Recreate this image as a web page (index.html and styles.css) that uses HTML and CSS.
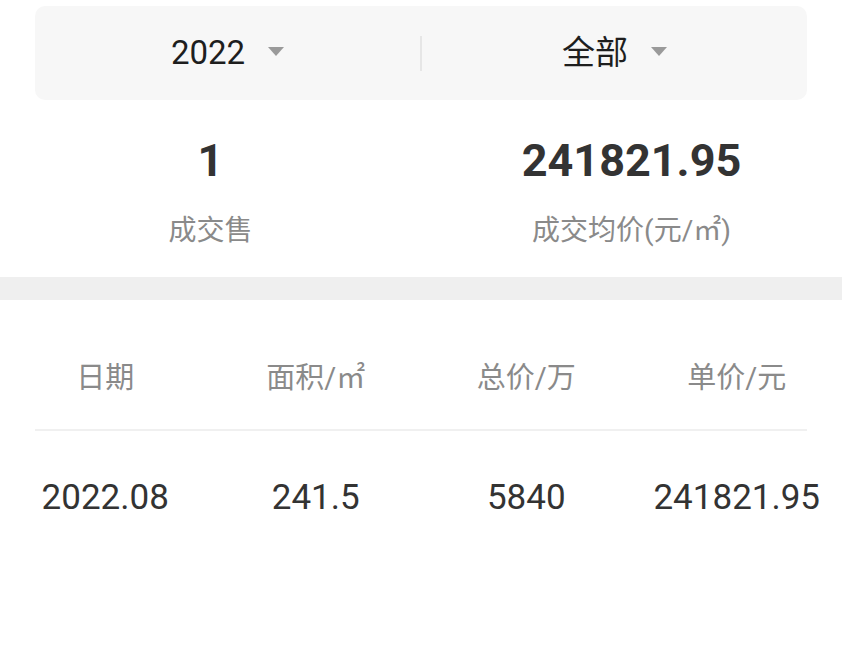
FILE: index.html
```html
<!DOCTYPE html>
<html lang="zh-CN">
<head>
<meta charset="utf-8">
<title>成交</title>
<link rel="stylesheet" href="styles.css">
</head>
<body>
<div class="filter">
  <div class="filter-item">
    <span class="filter-text">2022</span>
    <span class="arrow"></span>
  </div>
  <div class="filter-sep"></div>
  <div class="filter-item">
    <span class="filter-text">全部</span>
    <span class="arrow"></span>
  </div>
</div>

<div class="stats">
  <div class="stat">
    <div class="stat-num">1</div>
    <div class="stat-label">成交售</div>
  </div>
  <div class="stat">
    <div class="stat-num">241821.95</div>
    <div class="stat-label">成交均价(元/㎡)</div>
  </div>
</div>

<div class="band"></div>

<div class="table">
  <div class="row head">
    <div class="cell">日期</div>
    <div class="cell">面积/㎡</div>
    <div class="cell">总价/万</div>
    <div class="cell">单价/元</div>
  </div>
  <div class="divider"></div>
  <div class="row data">
    <div class="cell">2022.08</div>
    <div class="cell">241.5</div>
    <div class="cell">5840</div>
    <div class="cell">241821.95</div>
  </div>
</div>
</body>
</html>
```

FILE: styles.css
```css
* { box-sizing: border-box; }
html, body {
  margin: 0;
  padding: 0;
  background: #ffffff;
  font-family: Roboto, "Noto Sans CJK SC", "Noto Sans", sans-serif;
}
body {
  width: 842px;
  height: 657px;
  overflow: hidden;
}

.filter {
  margin: 6px 35px 0;
  height: 94px;
  background: #f7f7f7;
  border-radius: 10px;
  display: flex;
  align-items: center;
}
.filter-item {
  flex: 1;
  display: flex;
  align-items: center;
  justify-content: center;
  gap: 23px;
  padding-bottom: 1px;
}
.filter-text {
  font-size: 33px;
  line-height: 40px;
  color: #1e1e1e;
}
.arrow {
  width: 0;
  height: 0;
  border-left: 8px solid transparent;
  border-right: 8px solid transparent;
  border-top: 9px solid #9a9a9a;
  margin-top: -3px;
}
.filter-sep {
  width: 2px;
  height: 35px;
  background: #e6e6e6;
}

.stats {
  display: flex;
  padding: 34px 0 28px;
}
.stat {
  flex: 1;
  display: flex;
  flex-direction: column;
  align-items: center;
}
.stat-num {
  font-size: 45px;
  line-height: 54px;
  font-weight: 700;
  color: #333333;
}
.stat-label {
  margin-top: 25px;
  font-size: 28px;
  line-height: 36px;
  color: #8a8a8a;
}

.band {
  height: 23px;
  background: #efefef;
}

.table {
  padding-top: 58px;
}
.row {
  display: flex;
}
.cell {
  flex: 1;
  text-align: center;
  line-height: 40px;
  white-space: nowrap;
}
.head .cell {
  font-size: 29px;
  color: #8a8a8a;
}
.divider {
  margin: 31px 35px 0;
  height: 2px;
  background: #f0f0f0;
}
.data {
  padding-top: 47px;
}
.data .cell {
  font-size: 35px;
  color: #333333;
}
```
